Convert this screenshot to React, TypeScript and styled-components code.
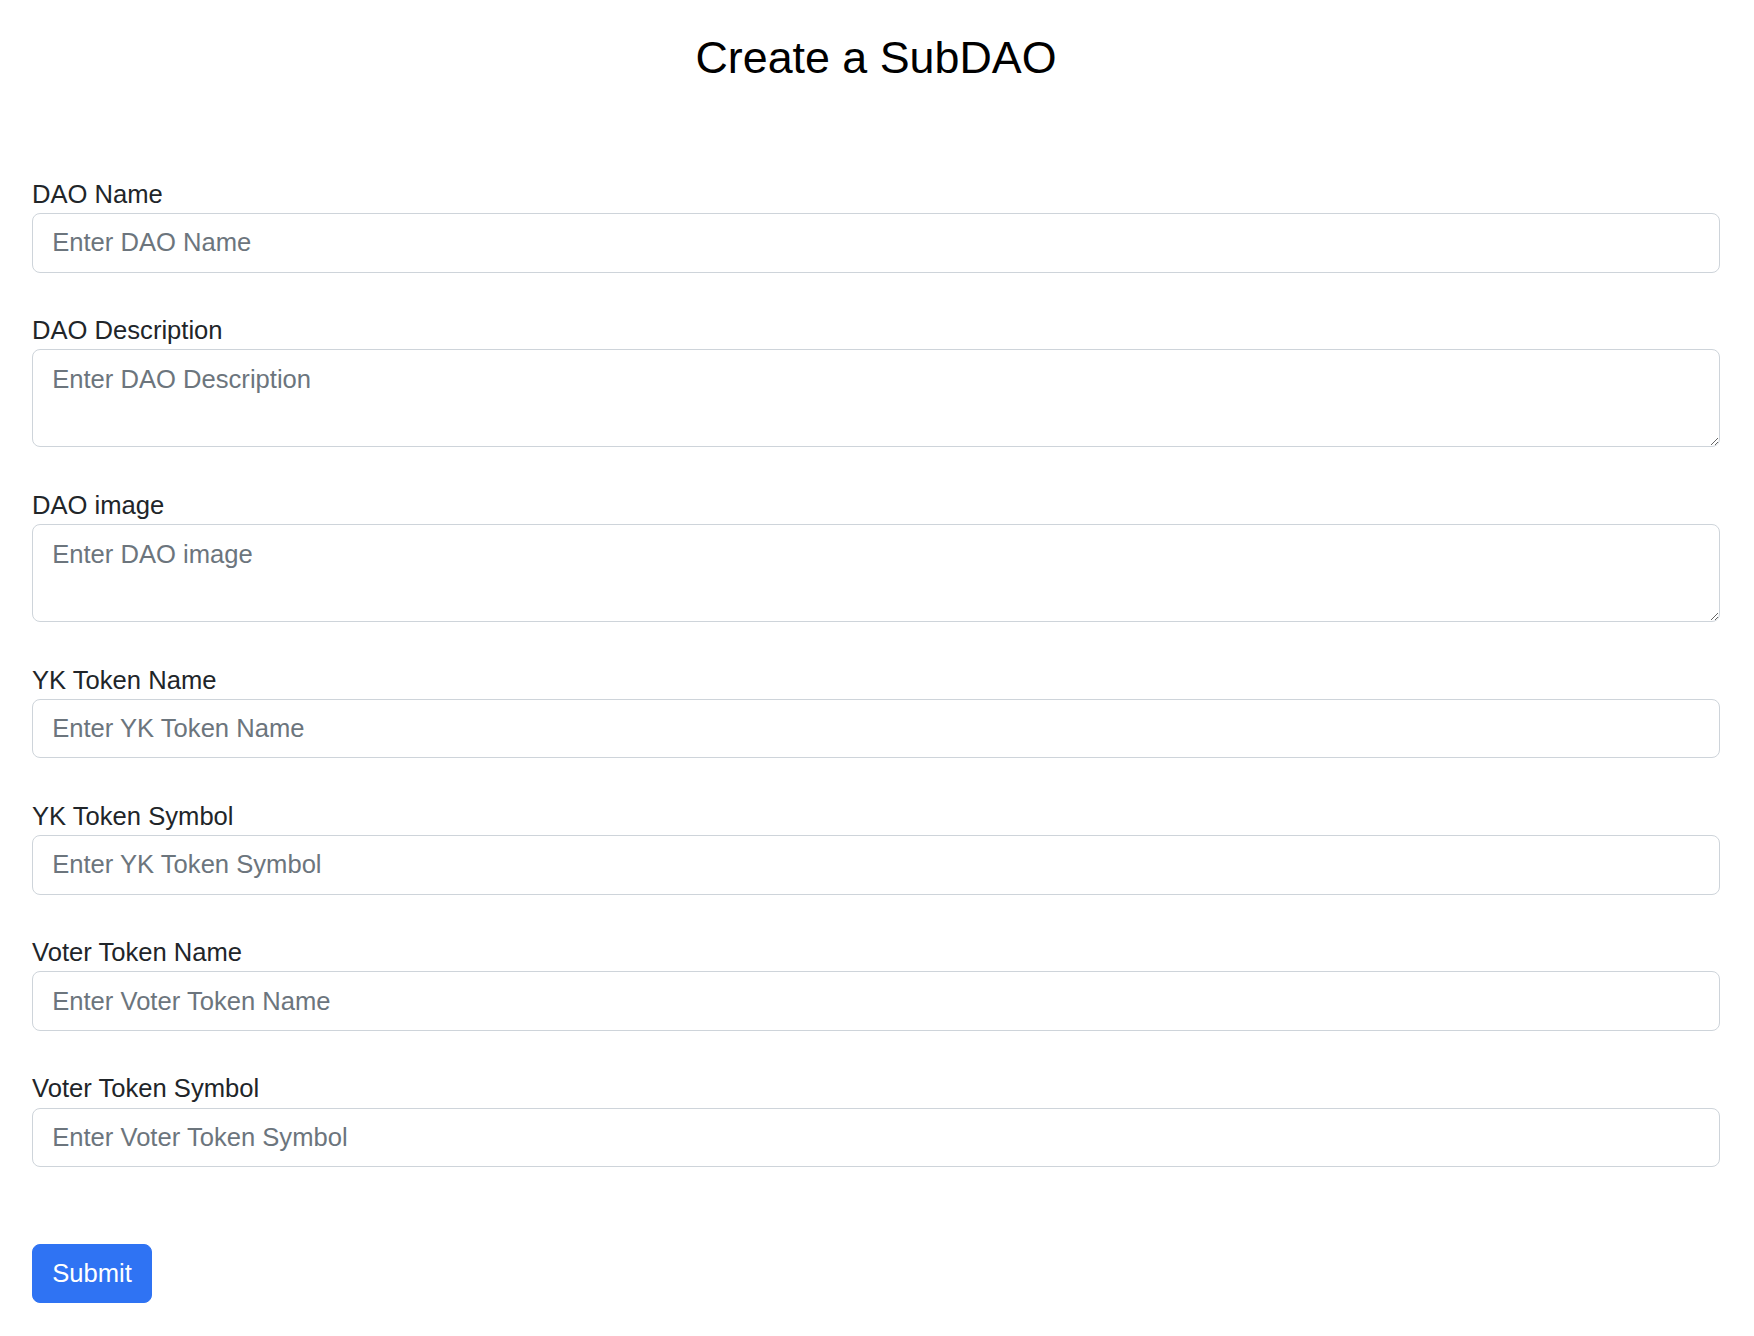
import React from "react";
import styled, { createGlobalStyle } from "styled-components";

const GlobalStyle = createGlobalStyle`
  html, body {
    margin: 0;
    padding: 0;
    background: #ffffff;
  }
  body {
    font-family: "Liberation Sans", Arial, Helvetica, sans-serif;
    color: #212529;
  }
  *, *::before, *::after {
    box-sizing: border-box;
  }
`;

const Page = styled.main`
  display: flex;
  flex-direction: column;
  padding: 31px 34px 40px 32px;
`;

const Title = styled.h1`
  margin: 0 0 90px 0;
  font-size: 44.8px;
  line-height: 1.2;
  font-weight: 400;
  color: #000000;
  text-align: center;
`;

const Form = styled.form`
  display: flex;
  flex-direction: column;
`;

const Group = styled.div`
  display: flex;
  flex-direction: column;
  margin-bottom: 38.4px;
`;

const Label = styled.label`
  display: block;
  font-size: 25.6px;
  line-height: 38.4px;
  color: #212529;
`;

const fieldCss = `
  display: block;
  width: 100%;
  margin: 0;
  padding: 9.6px 19.2px;
  font-family: "Liberation Sans", Arial, Helvetica, sans-serif;
  font-size: 25.6px;
  line-height: 38.4px;
  color: #212529;
  background: #ffffff;
  border: 1px solid #ced4da;
  border-radius: 8px;
  outline: none;
  &::placeholder {
    color: #6c757d;
    opacity: 1;
  }
`;

const Input = styled.input`
  ${fieldCss}
  height: 59.4px;
`;

const TextArea = styled.textarea<{ $rows: number }>`
  ${fieldCss}
  resize: vertical;
  height: ${(p) => p.$rows * 38.4 + 19.2 + 2}px;
`;

const SubmitButton = styled.button`
  align-self: flex-start;
  margin-top: 38.8px;
  height: 58.6px;
  padding: 0 19.2px;
  font-family: "Liberation Sans", Arial, Helvetica, sans-serif;
  font-size: 25.6px;
  line-height: 38.4px;
  color: #ffffff;
  background: #2f73f3;
  border: 1px solid #2f73f3;
  border-radius: 8px;
  cursor: pointer;
`;

type Field = { id: string; label: string; multiline?: boolean };

const fields: Field[] = [
  { id: "daoName", label: "DAO Name" },
  { id: "daoDescription", label: "DAO Description", multiline: true },
  { id: "daoImage", label: "DAO image", multiline: true },
  { id: "ykTokenName", label: "YK Token Name" },
  { id: "ykTokenSymbol", label: "YK Token Symbol" },
  { id: "voterTokenName", label: "Voter Token Name" },
  { id: "voterTokenSymbol", label: "Voter Token Symbol" },
];

export default function App() {
  return (
    <>
      <GlobalStyle />
      <Page>
        <Title>Create a SubDAO</Title>
        <Form onSubmit={(e) => e.preventDefault()}>
          {fields.map((f) => (
            <Group key={f.id}>
              <Label htmlFor={f.id}>{f.label}</Label>
              {f.multiline ? (
                <TextArea id={f.id} $rows={2} rows={2} placeholder={`Enter ${f.label}`} />
              ) : (
                <Input id={f.id} type="text" placeholder={`Enter ${f.label}`} />
              )}
            </Group>
          ))}
          <SubmitButton type="submit">Submit</SubmitButton>
        </Form>
      </Page>
    </>
  );
}
